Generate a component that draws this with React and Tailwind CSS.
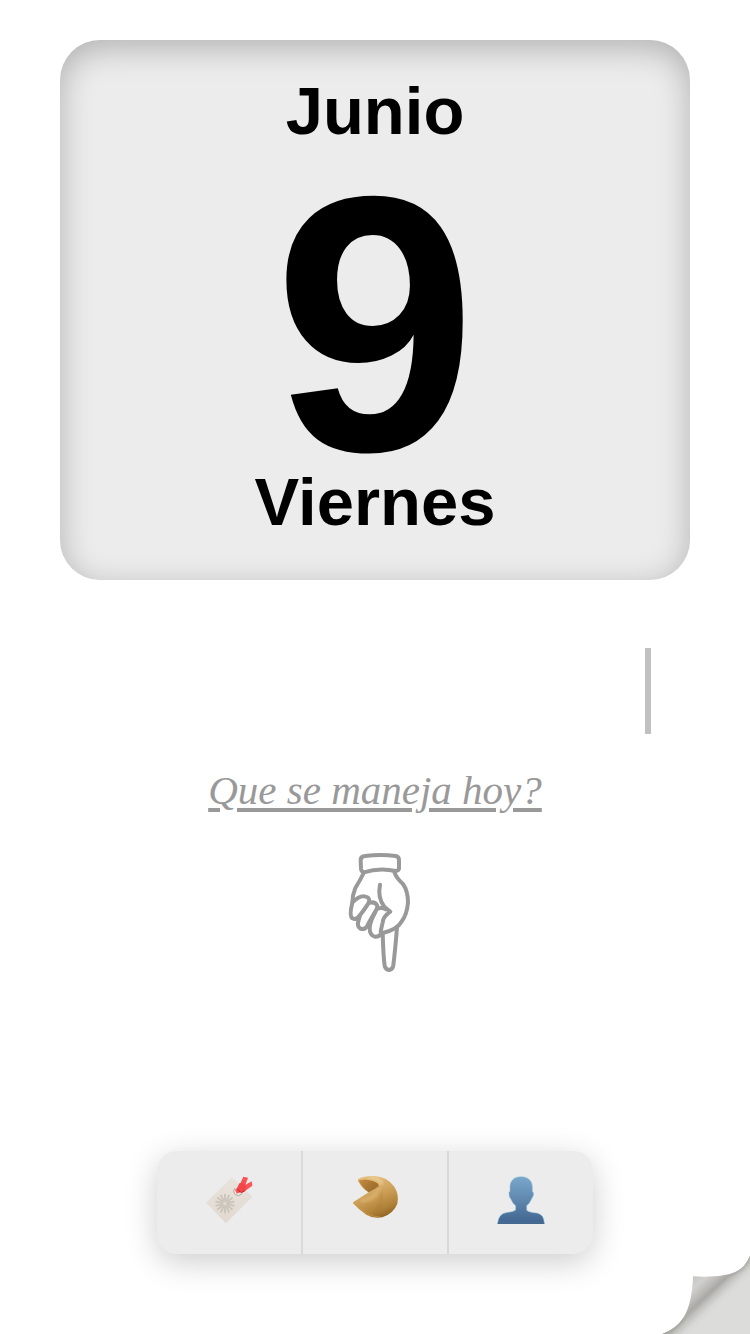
import React from "react";

function OmikujiTag() {
  const petals = Array.from({ length: 14 }, (_, i) => (i * 360) / 14);
  return (
    <svg viewBox="-3 0 240 240" className="size-20" aria-hidden="true">
      <defs>
        <linearGradient id="paper" x1="0" y1="0" x2="0" y2="1">
          <stop offset="0" stopColor="#e9e3dd" />
          <stop offset="1" stopColor="#e1d9d1" />
        </linearGradient>
      </defs>
      <path d="M126 48 L187 107 L108 187 L48 125 Z" fill="url(#paper)" />
      <g stroke="#cbc4ba" strokeWidth="5.5" strokeLinecap="round">
        {petals.map((a) => (
          <line key={a} x1="105" y1="119" x2="105" y2="101" transform={`rotate(${a} 105 128)`} />
        ))}
      </g>
      <circle cx="105" cy="128" r="5" fill="none" stroke="#cbc4ba" strokeWidth="2" />
      <path d="M134 82 Q127 94 136 101 Q147 108 156 98" fill="#f2eeea" stroke="#aaa6a1" strokeWidth="3" />
      <path d="M135 86 L145 78 L153 94 L140 98 Z" fill="#ff5a58" />
      <path d="M149 71 L160 47 L174 50 L165 74 Z" fill="#f75352" />
      <path d="M160 75 L185 61 L187 74 L166 89 Z" fill="#fb5554" />
      <path d="M148 67 Q159 64 169 73 L166 90 Q153 100 140 84 Z" fill="#f24749" />
      <path d="M142 87 L155 95 L164 89" fill="none" stroke="#b91f2b" strokeWidth="3" />
    </svg>
  );
}

function FortuneCookie() {
  return (
    <svg viewBox="-3 0 240 240" className="size-20" aria-hidden="true">
      <defs>
        <linearGradient id="cookie" x1="0.35" y1="0.1" x2="0.75" y2="1">
          <stop offset="0" stopColor="#e2bd7c" />
          <stop offset="0.45" stopColor="#c99b52" />
          <stop offset="0.75" stopColor="#b08139" />
          <stop offset="1" stopColor="#8c5e1f" />
        </linearGradient>
        <linearGradient id="fold" x1="0" y1="0" x2="1" y2="0.6">
          <stop offset="0" stopColor="#c48e43" />
          <stop offset="1" stopColor="#99692a" />
        </linearGradient>
        <filter id="cookieSoft">
          <feGaussianBlur stdDeviation="4" />
        </filter>
      </defs>
      <path
        d="M66 54 Q84 44 116 45 Q153 47 175 77 Q190 101 184 128 Q173 157 139 169 Q113 174 91 161 Q66 144 51 127 Q49 124 57 120 L98 94 Q77 83 66 60 Z"
        fill="url(#cookie)"
      />
      <path d="M67 58 Q91 52 111 60 Q131 67 128 77 L98 94 Q78 80 67 58 Z" fill="url(#fold)" />
      <path d="M132 77 Q121 113 75 120" fill="none" stroke="#d9b06c" strokeWidth="10" filter="url(#cookieSoft)" />
      <path d="M136 91 Q143 134 113 153" fill="none" stroke="#a67632" strokeWidth="10" opacity="0.25" filter="url(#cookieSoft)" />
      <path d="M102 49 Q132 53 139 70" fill="none" stroke="#f1d7a5" strokeWidth="6" filter="url(#cookieSoft)" />
      <path d="M52 126 Q82 148 96 160 Q110 167 132 168" fill="none" stroke="#cf9b48" strokeWidth="2" />
      <path d="M67 57 Q85 50 105 54 Q126 58 132 73" fill="none" stroke="#e5bd77" strokeWidth="3" />
    </svg>
  );
}

function Person() {
  return (
    <svg viewBox="-3 0 240 240" className="size-20" aria-hidden="true">
      <defs>
        <linearGradient id="person" x1="0" y1="0" x2="0" y2="1">
          <stop offset="0" stopColor="#79a8cb" />
          <stop offset="0.5" stopColor="#6087ae" />
          <stop offset="1" stopColor="#406490" />
        </linearGradient>
      </defs>
      <path
        d="M117 47 C139 47 151 60 151 78 L151 91 Q156 94 154 104 Q151 109 149 113 Q143 128 134 134 L134 148 Q139 153 154 155 Q174 156 181 166 Q186 173 187 187 L47 187 Q48 174 54 166 Q61 156 79 154 Q95 152 101 147 L101 134 Q92 128 86 113 Q81 109 81 98 Q80 93 84 91 L84 78 C84 60 95 47 117 47 Z"
        fill="url(#person)"
        stroke="#8ec0dc"
        strokeWidth="1.5"
      />
      <path d="M47 187 H187" stroke="#45688f" strokeWidth="4" />
    </svg>
  );
}

function PointingHand() {
  return (
    <svg
      viewBox="30 30 210 375"
      className="h-[125px] w-[70px] overflow-visible"
      fill="none"
      stroke="#999999"
      strokeWidth="12"
      strokeLinecap="round"
      strokeLinejoin="round"
      aria-hidden="true"
    >
      <path d="M101 97 Q94 94 93 86 L92 61 Q91 50 105 48 Q153 42 197 48 Q207 50 207 60 L207 86 Q206 92 197 93 Q149 82 101 97 Z" />
      <path d="M101 99 Q90 122 76 144 Q67 166 67 188 M193 96 Q198 113 219 132 Q234 153 234 188 Q231 224 214 246 Q201 269 158 279" />
      <path d="M150 134 Q142 174 163 200 L181 215 Q160 229 158 247 L152 274" />
      <path d="M67 188 Q89 165 107 170 Q123 174 115 190 Q104 208 88 228 Q79 241 67 235 Q57 227 67 188" />
      <path d="M117 188 Q137 184 142 198 Q143 205 132 221 Q118 244 111 259 Q103 271 90 265 Q80 258 86 240 L90 226" />
      <path d="M142 206 Q156 201 167 208 M136 216 Q119 247 119 265 Q119 286 134 290 Q149 291 154 278" />
      <path d="M158 278 Q160 350 164 378 Q168 390 178 390 Q188 388 190 376 Q196 326 201 262" />
    </svg>
  );
}

function PageCurl() {
  return (
    <svg viewBox="0 0 264 237" className="absolute right-0 bottom-0 h-[79px] w-[88px]" aria-hidden="true">
      <defs>
        <linearGradient id="under" gradientUnits="userSpaceOnUse" x1="132" y1="124" x2="166" y2="160">
          <stop offset="0" stopColor="#a9a8a4" />
          <stop offset="0.3" stopColor="#c2c2bf" />
          <stop offset="0.7" stopColor="#d8d8d6" />
          <stop offset="1" stopColor="#dcdcda" />
        </linearGradient>
        <linearGradient id="flap" gradientUnits="userSpaceOnUse" x1="84" y1="73" x2="132" y2="124">
          <stop offset="0" stopColor="#c6c6c4" />
          <stop offset="0.4" stopColor="#d0d0ce" />
          <stop offset="0.75" stopColor="#bdbbb8" />
          <stop offset="1" stopColor="#a9a8a4" />
        </linearGradient>
        <clipPath id="corner">
          <path d="M0 237 Q44 220 64 188 L204 57 Q246 46 264 2 V237 Z" />
        </clipPath>
        <filter id="curlSoft">
          <feGaussianBlur stdDeviation="4" />
        </filter>
      </defs>
      <path d="M0 237 Q44 220 64 188 L204 57 Q246 46 264 2 V237 Z" fill="url(#under)" />
      <g clipPath="url(#corner)">
        <path d="M0 237 Q44 220 64 188 M204 57 Q246 46 264 2" fill="none" stroke="#9b9b94" strokeWidth="9" opacity="0.6" filter="url(#curlSoft)" />
      </g>
      <path d="M93 64 Q153 69 209 56 L64 189 Q91 144 93 64 Z" fill="url(#flap)" />
    </svg>
  );
}

const actions = [
  { label: "Omikuji", Icon: OmikujiTag },
  { label: "Galleta de la fortuna", Icon: FortuneCookie },
  { label: "Perfil", Icon: Person },
];

export default function App() {
  return (
    <main className="relative flex min-h-screen flex-col overflow-hidden bg-white font-['Liberation_Sans',Arial,sans-serif]">
      <section className="mx-[60px] mt-10 rounded-[40px] bg-[#ececec] pt-[31px] pb-[38px] text-center font-bold text-black shadow-[inset_0_8px_32px_rgba(0,0,0,0.25)]">
        <h1 className="text-[67px] leading-[80px]">Junio</h1>
        <p className="mt-[35px] text-[364px] leading-[276px]">9</p>
        <p className="text-[67px] leading-[80px]">Viernes</p>
      </section>

      <div className="mx-[99px] mt-[68px] h-[86px] border-r-[6px] border-[#c0c0c0]" />

      <div className="mt-4 flex flex-col items-center text-[#999999]">
        <a
          href="#hoy"
          className="font-['Liberation_Serif','Times_New_Roman',serif] text-[41px] leading-[80px] italic underline decoration-4 underline-offset-4"
        >
          Que se maneja hoy?
        </a>
        <div className="mt-5">
          <PointingHand />
        </div>
      </div>

      <nav className="mx-auto mt-auto mb-20 flex h-[103px] divide-x-2 divide-[#d9d9d9] overflow-hidden rounded-[20px] bg-[#ececec] shadow-[0_8px_32px_rgba(0,0,0,0.2)]">
        {actions.map(({ label, Icon }) => (
          <button key={label} type="button" aria-label={label} className="box-content flex w-36 items-center justify-center">
            <span className="mb-1">
              <Icon />
            </span>
          </button>
        ))}
      </nav>

      <PageCurl />
    </main>
  );
}
